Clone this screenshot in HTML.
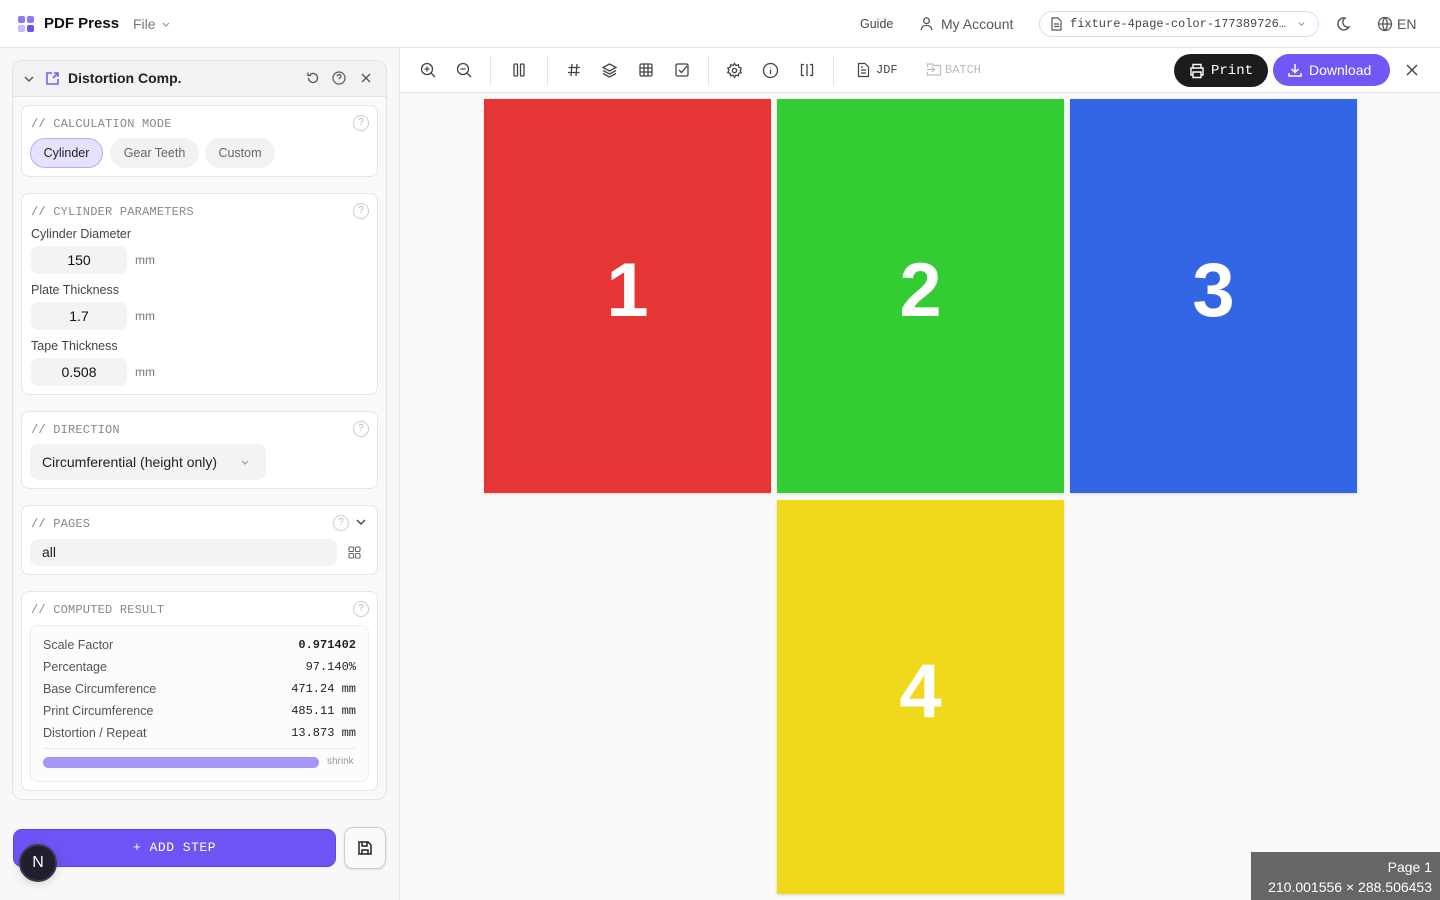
<!DOCTYPE html>
<html><head><meta charset="utf-8">
<style>
*{box-sizing:border-box;margin:0;padding:0}
body{width:1440px;height:900px;overflow:hidden;font-family:"Liberation Sans",sans-serif;background:#fafafa;position:relative;color:#222}
.a{position:absolute}
.mono{font-family:"Liberation Mono",monospace}
svg{display:block}
.hdr{left:0;top:0;width:1440px;height:48px;background:#fff;border-bottom:1px solid #e4e4e4}
.side{left:0;top:48px;width:400px;height:852px;background:#f8f8f8;border-right:1px solid #e4e4e4}
.tb{left:400px;top:48px;width:1040px;height:45px;background:#fff;border-bottom:1px solid #e4e4e4}
.card{left:12px;top:60px;width:375px;height:740px;background:#f9f9f9;border:1px solid #e4e4e4;border-radius:10px;overflow:hidden}
.sec{position:absolute;left:21px;width:357px;background:#fff;border:1px solid #e6e6e6;border-radius:8px}
.lbl{position:absolute;left:9px;font-family:"Liberation Mono",monospace;font-size:12px;color:#888;letter-spacing:.2px}
.q{position:absolute;width:16px;height:16px;border:1px solid #ccc;border-radius:50%;font-size:10px;color:#bbb;text-align:center;line-height:14px}
.inp{position:absolute;left:9px;width:96px;height:28px;background:#f3f3f3;border-radius:8px;font-size:14px;text-align:center;line-height:28px;color:#111}
.mm{position:absolute;left:113px;font-size:12px;color:#777}
.fl{position:absolute;left:9px;font-size:12.5px;color:#444}
.row{position:absolute;left:12px;right:12px;font-size:12.5px;color:#555}
.row span{float:right;font-family:"Liberation Mono",monospace;color:#222;font-size:12px}
.pg{position:absolute;width:287px;height:394px;color:#fff;font-weight:bold;font-size:76px;text-align:center;line-height:384px;box-shadow:0 1px 3px rgba(0,0,0,.15)}
.ic{position:absolute;top:14px}
.sep{position:absolute;top:8px;width:1px;height:30px;background:#e4e4e4}
</style></head><body>
<div class="a hdr">
  <div class="a" style="left:18px;top:16px;width:17px;height:17px">
    <div class="a" style="left:0;top:0;width:7px;height:7px;background:#8b7cf6;border-radius:2px"></div>
    <div class="a" style="left:9px;top:0;width:7px;height:7px;background:#8b7cf6;border-radius:2px"></div>
    <div class="a" style="left:0;top:9px;width:7px;height:7px;background:#c4bbfb;border-radius:2px"></div>
    <div class="a" style="left:9px;top:9px;width:7px;height:7px;background:#6a55f0;border-radius:2px"></div>
  </div>
  <div class="a" style="left:44px;top:15px;font-size:15px;font-weight:bold;color:#111">PDF Press</div>
  <div class="a" style="left:133px;top:16px;font-size:14px;color:#777">File</div>
  <svg class="a" style="left:161px;top:19px" width="10" height="10" viewBox="0 0 10 10"><path d="M2 4l3 3 3-3" stroke="#999" fill="none" stroke-width="1.2"/></svg>
  <div class="a" style="left:860px;top:17px;font-size:12.5px;color:#444">Guide</div>
  <svg class="a" style="left:919px;top:16px" width="15" height="15" viewBox="0 0 16 16" fill="none" stroke="#555" stroke-width="1.4"><circle cx="8" cy="5" r="3"/><path d="M2.5 15c0-3.5 2.5-5 5.5-5s5.5 1.5 5.5 5"/></svg>
  <div class="a" style="left:941px;top:16px;font-size:14px;color:#555">My Account</div>
  <div class="a" style="left:1039px;top:11px;width:280px;height:26px;border:1px solid #ddd8fb;border-radius:13px"></div>
  <svg class="a" style="left:1050px;top:17px" width="13" height="14" viewBox="0 0 13 14" fill="none" stroke="#555" stroke-width="1.2"><path d="M2 1h6l3 3v9H2z M4 7h5M4 9.5h5"/></svg>
  <div class="a mono" style="left:1070px;top:17px;font-size:12px;color:#444">fixture-4page-color-177389726…</div>
  <svg class="a" style="left:1297px;top:19px" width="9" height="9" viewBox="0 0 10 10"><path d="M2 4l3 3 3-3" stroke="#999" fill="none" stroke-width="1.2"/></svg>
  <svg class="a" style="left:1335px;top:16px" width="16" height="16" viewBox="0 0 16 16" fill="none" stroke="#555" stroke-width="1.4"><path d="M10 2a6 6 0 1 0 4 9A5 5 0 0 1 10 2z"/></svg>
  <svg class="a" style="left:1377px;top:16px" width="16" height="16" viewBox="0 0 16 16" fill="none" stroke="#555" stroke-width="1.3"><circle cx="8" cy="8" r="6.5"/><path d="M1.5 8h13M8 1.5c-3 3.5-3 9.5 0 13M8 1.5c3 3.5 3 9.5 0 13"/></svg>
  <div class="a" style="left:1397px;top:16px;font-size:14px;color:#555">EN</div>
</div>

<div class="a side">
  <div class="a card" style="top:12px">
    <div class="a" style="left:0;top:0;width:375px;height:36px;background:#f2f2f2;border-bottom:1px solid #e4e4e4"></div>
    <svg class="a" style="left:10px;top:12px" width="12" height="12" viewBox="0 0 12 12"><path d="M2 4l4 4 4-4" stroke="#555" fill="none" stroke-width="1.4"/></svg>
    <svg class="a" style="left:32px;top:10px" width="15" height="15" viewBox="0 0 15 15" fill="none" stroke="#7c5cf5" stroke-width="1.6"><path d="M7 2H2v11h11V8M8 7l5-5M9 2h4v4"/></svg>
    <div class="a" style="left:55px;top:9px;font-size:14px;font-weight:bold;color:#222">Distortion Comp.</div>
    <svg class="a" style="left:293px;top:10px" width="14" height="14" viewBox="0 0 14 14" fill="none" stroke="#555" stroke-width="1.3"><path d="M2.5 7A4.5 4.5 0 1 0 4 3.6M2 1.5v3h3"/></svg>
    <svg class="a" style="left:319px;top:10px" width="14" height="14" viewBox="0 0 14 14" fill="none" stroke="#555" stroke-width="1.2"><circle cx="7" cy="7" r="6"/><path d="M5.3 5.3a1.8 1.8 0 1 1 2.4 1.7c-.5.2-.7.6-.7 1.1M7 10v.3"/></svg>
    <svg class="a" style="left:347px;top:11px" width="12" height="12" viewBox="0 0 12 12" stroke="#555" stroke-width="1.3"><path d="M2 2l8 8M10 2l-8 8"/></svg>
  </div>

  <div class="sec" style="top:57px;height:72px">
    <div class="lbl" style="top:11px">// CALCULATION MODE</div>
    <div class="q" style="left:331px;top:9px">?</div>
    <div class="a" style="left:8px;top:32px;width:73px;height:30px;background:#e6e1fd;border:1px solid #b9acf8;border-radius:15px;font-size:12.5px;text-align:center;line-height:28px;color:#222">Cylinder</div>
    <div class="a" style="left:88px;top:32px;width:89px;height:30px;background:#f2f2f2;border-radius:15px;font-size:12.5px;text-align:center;line-height:30px;color:#666">Gear Teeth</div>
    <div class="a" style="left:183px;top:32px;width:70px;height:30px;background:#f2f2f2;border-radius:15px;font-size:12.5px;text-align:center;line-height:30px;color:#666">Custom</div>
  </div>

  <div class="sec" style="top:145px;height:202px">
    <div class="lbl" style="top:11px">// CYLINDER PARAMETERS</div>
    <div class="q" style="left:331px;top:9px">?</div>
    <div class="fl" style="top:33px">Cylinder Diameter</div>
    <div class="inp" style="top:52px">150</div><div class="mm" style="top:59px">mm</div>
    <div class="fl" style="top:89px">Plate Thickness</div>
    <div class="inp" style="top:108px">1.7</div><div class="mm" style="top:115px">mm</div>
    <div class="fl" style="top:145px">Tape Thickness</div>
    <div class="inp" style="top:164px">0.508</div><div class="mm" style="top:171px">mm</div>
  </div>

  <div class="sec" style="top:363px;height:78px">
    <div class="lbl" style="top:11px">// DIRECTION</div>
    <div class="q" style="left:331px;top:9px">?</div>
    <div class="a" style="left:8px;top:32px;width:236px;height:36px;background:#f3f3f3;border-radius:8px;font-size:14px;line-height:36px;padding-left:12px;color:#222">Circumferential (height only)</div>
    <svg class="a" style="left:218px;top:45px" width="10" height="10" viewBox="0 0 10 10"><path d="M2 4l3 3 3-3" stroke="#999" fill="none" stroke-width="1.2"/></svg>
  </div>

  <div class="sec" style="top:457px;height:70px">
    <div class="lbl" style="top:11px">// PAGES</div>
    <div class="q" style="left:311px;top:9px">?</div>
    <svg class="a" style="left:333px;top:10px" width="12" height="12" viewBox="0 0 12 12"><path d="M2 4l4 4 4-4" stroke="#444" fill="none" stroke-width="1.4"/></svg>
    <div class="a" style="left:8px;top:33px;width:307px;height:27px;background:#f3f3f3;border-radius:8px;font-size:14px;line-height:27px;padding-left:12px;color:#222">all</div>
    <svg class="a" style="left:326px;top:40px" width="13" height="13" viewBox="0 0 13 13" fill="none" stroke="#666" stroke-width="1.1"><rect x="1" y="1" width="4.5" height="4.5" rx="1"/><rect x="7.5" y="1" width="4.5" height="4.5" rx="1"/><rect x="1" y="7.5" width="4.5" height="4.5" rx="1"/><rect x="7.5" y="7.5" width="4.5" height="4.5" rx="1"/></svg>
  </div>

  <div class="sec" style="top:543px;height:200px">
    <div class="lbl" style="top:11px">// COMPUTED RESULT</div>
    <div class="q" style="left:331px;top:9px">?</div>
    <div class="a" style="left:8px;top:33px;width:339px;height:157px;background:#fcfcfc;border:1px solid #ececec;border-radius:8px">
      <div class="row" style="top:12px">Scale Factor<span style="font-weight:bold">0.971402</span></div>
      <div class="row" style="top:34px">Percentage<span>97.140%</span></div>
      <div class="row" style="top:56px">Base Circumference<span>471.24 mm</span></div>
      <div class="row" style="top:78px">Print Circumference<span>485.11 mm</span></div>
      <div class="row" style="top:100px">Distortion / Repeat<span>13.873 mm</span></div>
      <div class="a" style="left:12px;right:12px;top:122px;height:1px;background:#ececec"></div>
      <div class="a" style="left:12px;top:131px;width:276px;height:11px;background:#a596fa;border-radius:6px"></div>
      <div class="a" style="left:296px;top:130px;font-size:10px;color:#999">shrink</div>
    </div>
  </div>

  <div class="a" style="left:13px;top:781px;width:323px;height:38px;background:#6d55f5;border:1px solid #5a45e0;border-radius:9px;color:#fff;font-family:'Liberation Mono',monospace;font-size:13px;text-align:center;line-height:36px;letter-spacing:.5px">+ ADD STEP</div>
  <div class="a" style="left:344px;top:779px;width:42px;height:42px;background:#fafafa;border:1px solid #ccc;border-radius:9px;box-shadow:0 1px 2px rgba(0,0,0,.1)"></div>
  <svg class="a" style="left:357px;top:792px" width="16" height="16" viewBox="0 0 16 16" fill="none" stroke="#222" stroke-width="1.5"><path d="M2 2h9l3 3v9H2z M5 2v4h5V2 M5 14v-4h6v4"/></svg>
  <div class="a" style="left:19px;top:796px;width:38px;height:38px;background:#1f1f2e;border:2px solid #3a3a4a;border-radius:50%;color:#fff;font-size:16px;text-align:center;line-height:34px;box-shadow:0 2px 10px rgba(0,0,0,.15)">N</div>
</div>

<div class="a tb">
  <svg class="ic" style="left:20px" width="17" height="17" viewBox="0 0 17 17" fill="none" stroke="#444" stroke-width="1.3"><circle cx="7" cy="7" r="5.5"/><path d="M11 11l4 4M4.5 7h5M7 4.5v5"/></svg>
  <svg class="ic" style="left:56px" width="17" height="17" viewBox="0 0 17 17" fill="none" stroke="#444" stroke-width="1.3"><circle cx="7" cy="7" r="5.5"/><path d="M11 11l4 4M4.5 7h5"/></svg>
  <div class="sep" style="left:90px"></div>
  <svg class="ic" style="left:112px" width="14" height="16" viewBox="0 0 14 16" fill="none" stroke="#444" stroke-width="1.3"><rect x="2" y="2" width="3.5" height="12" rx="1"/><rect x="8.5" y="2" width="3.5" height="12" rx="1"/></svg>
  <div class="sep" style="left:147px"></div>
  <svg class="ic" style="left:166px" width="16" height="16" viewBox="0 0 16 16" fill="none" stroke="#444" stroke-width="1.3"><path d="M6 2L5 14M11 2l-1 12M2.5 5.5h11.5M2 10.5h11.5"/></svg>
  <svg class="ic" style="left:201px" width="17" height="17" viewBox="0 0 17 17" fill="none" stroke="#444" stroke-width="1.3"><path d="M8.5 2l6.5 3.5-6.5 3.5L2 5.5z M2 8.5l6.5 3.5 6.5-3.5 M2 11.5l6.5 3.5 6.5-3.5"/></svg>
  <svg class="ic" style="left:238px" width="16" height="16" viewBox="0 0 16 16" fill="none" stroke="#444" stroke-width="1.3"><rect x="2" y="2" width="12" height="12" rx="1.5"/><path d="M2 6h12M2 10h12M6 2v12M10 2v12"/></svg>
  <svg class="ic" style="left:274px" width="16" height="16" viewBox="0 0 16 16" fill="none" stroke="#444" stroke-width="1.3"><rect x="2" y="2" width="12" height="12" rx="1.5"/><path d="M5 8l2.5 2.5L13 4"/></svg>
  <div class="sep" style="left:308px"></div>
  <svg class="ic" style="left:326px" width="17" height="17" viewBox="0 0 24 24" fill="none" stroke="#444" stroke-width="1.8"><circle cx="12" cy="12" r="3"/><path d="M12 2l2 3 3.5-1 .5 3.5 3.5 1-1.5 3.5 1.5 3-3.5 1-.5 3.5-3.5-1-2 3-2-3-3.5 1-.5-3.5-3.5-1 1.5-3.5L2.5 8.5 6 7.5 6.5 4 10 5z"/></svg>
  <svg class="ic" style="left:362px" width="17" height="17" viewBox="0 0 17 17" fill="none" stroke="#444" stroke-width="1.3"><circle cx="8.5" cy="8.5" r="7"/><path d="M8.5 7.5v4.5M8.5 5v.5"/></svg>
  <svg class="ic" style="left:399px" width="16" height="16" viewBox="0 0 16 16" fill="none" stroke="#444" stroke-width="1.3"><path d="M5 2.5H2.5v11H5M11 2.5h2.5v11H11M8 2v12"/></svg>
  <div class="sep" style="left:433px"></div>
  <svg class="ic" style="left:457px" width="13" height="16" viewBox="0 0 13 16" fill="none" stroke="#444" stroke-width="1.2"><path d="M1.5 1.5h6.5l3.5 3.5v9.5h-10z M4 8h5M4 11h5M4 5h2"/></svg>
  <div class="a mono" style="left:476px;top:15px;font-size:12px;color:#444">JDF</div>
  <svg class="ic" style="left:526px" width="16" height="15" viewBox="0 0 16 15" fill="none" stroke="#bbb" stroke-width="1.2"><path d="M1.5 5V2h5l1 1.5h7V13h-13V10 M1 7.5h7M6 5l2.5 2.5L6 10"/></svg>
  <div class="a mono" style="left:545px;top:15px;font-size:12px;color:#bbb">BATCH</div>
  <div class="a" style="left:774px;top:6px;width:94px;height:33px;background:#1c1c1c;border-radius:17px"></div>
  <svg class="a" style="left:789px;top:15px" width="16" height="16" viewBox="0 0 16 16" fill="none" stroke="#fff" stroke-width="1.4"><path d="M4 5V1.5h8V5 M4 12H2V5h12v7h-2 M4 9h8v5.5H4z"/></svg>
  <div class="a mono" style="left:811px;top:15px;font-size:14px;color:#fff">Print</div>
  <div class="a" style="left:873px;top:6px;width:117px;height:32px;background:#7256f6;border-radius:16px"></div>
  <svg class="a" style="left:887px;top:14px" width="16" height="16" viewBox="0 0 16 16" fill="none" stroke="#fff" stroke-width="1.5"><path d="M8 2v8M4.5 7L8 10.5 11.5 7M2 11v3h12v-3"/></svg>
  <div class="a" style="left:909px;top:14px;font-size:14px;color:#fff">Download</div>
  <svg class="a" style="left:1006px;top:16px" width="12" height="12" viewBox="0 0 12 12" stroke="#444" stroke-width="1.4"><path d="M1 1l10 10M11 1L1 11"/></svg>
</div>

<div class="pg" style="left:484px;top:99px;background:#e53535">1</div>
<div class="pg" style="left:777px;top:99px;background:#33cc33">2</div>
<div class="pg" style="left:1070px;top:99px;background:#3366e5">3</div>
<div class="pg" style="left:777px;top:500px;background:#f0d91a">4</div>

<div class="a" style="left:1251px;top:852px;width:189px;height:48px;background:#666;color:#fff;font-size:14px;text-align:right;padding:5px 8px 0 0;line-height:20px">Page 1<br>210.001556 × 288.506453</div>
</body></html>
